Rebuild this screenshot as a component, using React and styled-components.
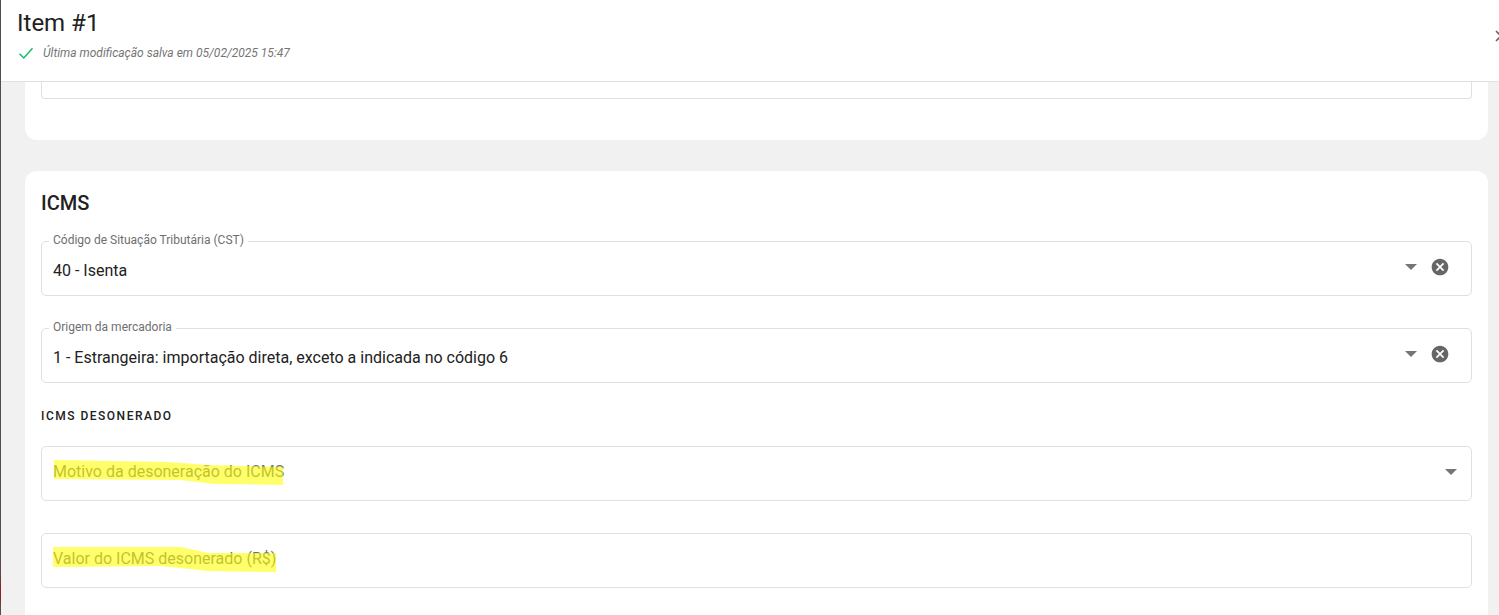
import React from "react";
import styled, { createGlobalStyle } from "styled-components";

const GlobalStyle = createGlobalStyle`
  html, body {
    margin: 0;
    height: 100%;
    overflow: hidden;
    background: #f1f1f1;
    font-family: Roboto, "Liberation Sans", sans-serif;
  }
`;

const Page = styled.div`
  display: flex;
  width: 1499px;
  height: 615px;
  overflow: hidden;
`;

const LeftEdge = styled.div`
  flex: 0 0 1px;
  background: linear-gradient(
    to bottom,
    #4f4f4f 0,
    #4f4f4f 525px,
    #5e4a4a 570px,
    #8c1f2a 590px,
    #8c1f2a 598px,
    #5e4a4a 605px
  );
`;

const Drawer = styled.div`
  flex: 1;
  min-width: 0;
  display: flex;
  flex-direction: column;
`;

const Header = styled.header`
  flex: 0 0 82px;
  box-sizing: border-box;
  position: relative;
  background: #fff;
  border-bottom: 1px solid #e0e0e0;
  padding: 8px 16px 0;
`;

const Title = styled.h1`
  margin: 0;
  font-size: 24px;
  line-height: 30px;
  font-weight: 400;
  color: #212121;
`;

const Status = styled.div`
  display: flex;
  align-items: center;
  gap: 9px;
  margin: 7px 0 0 1px;
  font-size: 12px;
  line-height: 16px;
  font-style: italic;
  color: #757575;
`;

const CloseButton = styled.div`
  position: absolute;
  top: 25px;
  left: 1491px;
  display: flex;
  color: #666;
`;

const Body = styled.main`
  flex: 1;
  min-height: 0;
  overflow: hidden;
  padding: 0 11px 0 24px;
  display: flex;
  flex-direction: column;
  gap: 31px;
`;

const TopCard = styled.section`
  flex: 0 0 58px;
  box-sizing: border-box;
  background: #fff;
  border-radius: 0 0 12px 12px;
  padding: 0 16px;
`;

const CutField = styled.div`
  height: 17px;
  box-sizing: border-box;
  border: 1px solid #e0e0e0;
  border-top: 0;
  border-radius: 0 0 4px 4px;
`;

const Card = styled.section`
  flex: 0 0 480px;
  box-sizing: border-box;
  background: #fff;
  border-radius: 12px 12px 0 0;
  padding: 20px 16px 0;
`;

const SectionTitle = styled.h2`
  margin: 0 0 26px;
  font-size: 20px;
  line-height: 24px;
  font-weight: 500;
  color: #212121;
`;

const Outline = styled.div`
  position: relative;
  box-sizing: border-box;
  height: 55px;
  margin-bottom: ${(p) => p.$gap}px;
  border: 1px solid #e0e0e0;
  border-radius: 5px;
  background: #fff;
  display: flex;
  align-items: center;
  padding: 0 11px;
`;

const FloatLabel = styled.label`
  position: absolute;
  top: -9px;
  left: 7px;
  padding: 0 4px;
  background: #fff;
  font-size: 12px;
  line-height: 14px;
  color: #6f6f6f;
`;

const Value = styled.span`
  flex: 1;
  font-size: 16px;
  line-height: 20px;
  color: ${(p) => (p.$empty ? "#6f6f6f" : "#212121")};
  transform: translateY(${(p) => (p.$empty ? "-2px" : "2px")});
`;

const Icons = styled.div`
  display: flex;
  align-items: center;
  gap: 13px;
  margin-right: ${(p) => (p.$clear ? "10px" : "3px")};
  transform: translateY(-2px);
`;

const Subheading = styled.h3`
  margin: 0 0 23px;
  font-size: 12px;
  line-height: 13px;
  font-weight: 500;
  letter-spacing: 1.5px;
  color: #212121;
`;

const Marker = styled.svg`
  position: absolute;
  left: 0;
  top: 0;
  pointer-events: none;
`;

const Check = () => (
  <svg width="16" height="16" viewBox="0 0 16 16" fill="none">
    <path d="M1.5 8.8 L5.8 13 L14.5 3.2" stroke="#0fbf6b" strokeWidth="1.5" />
  </svg>
);

const ArrowDrop = () => (
  <svg width="12" height="6" viewBox="0 0 12 6">
    <path d="M0 0h12L6 6z" fill="#757575" />
  </svg>
);

const ClearIcon = () => (
  <svg width="20" height="20" viewBox="0 0 24 24">
    <path
      fill="#666"
      d="M12 2C6.47 2 2 6.47 2 12s4.47 10 10 10 10-4.47 10-10S17.53 2 12 2zm5 13.59L15.59 17 12 13.41 8.41 17 7 15.59 10.59 12 7 8.41 8.41 7 12 10.59 15.59 7 17 8.41 13.41 12 17 15.59z"
    />
  </svg>
);

const Field = ({ label, value, placeholder, select, clear, marker, gap = 32 }) => (
  <Outline $gap={gap}>
    {label && <FloatLabel>{label}</FloatLabel>}
    <Value $empty={!value}>{value || placeholder}</Value>
    {select && (
      <Icons $clear={clear}>
        <ArrowDrop />
        {clear && <ClearIcon />}
      </Icons>
    )}
    {marker && (
      <Marker width="260" height="50">
        <polygon points={marker} fill="#ffff00" fillOpacity="0.58" />
      </Marker>
    )}
  </Outline>
);

export default function App() {
  return (
    <Page>
      <GlobalStyle />
      <LeftEdge />
      <Drawer>
        <Header>
          <Title>Item #1</Title>
          <Status>
            <Check />
            Última modificação salva em 05/02/2025 15:47
          </Status>
          <CloseButton>
            <svg width="20" height="20" viewBox="0 0 20 20" fill="none">
              <path d="M4 6l5 5M9 11l-5 5" stroke="currentColor" strokeWidth="1.6" />
            </svg>
          </CloseButton>
        </Header>
        <Body>
          <TopCard>
            <CutField />
          </TopCard>
          <Card>
            <SectionTitle>ICMS</SectionTitle>
            <Field
              label="Código de Situação Tributária (CST)"
              value="40 - Isenta"
              select
              clear
            />
            <Field
              label="Origem da mercadoria"
              value="1 - Estrangeira: importação direta, exceto a indicada no código 6"
              select
              clear
              gap={27}
            />
            <Subheading>ICMS DESONERADO</Subheading>
            <Field
              placeholder="Motivo da desoneração do ICMS"
              select
              marker="12,13 126,15 166,18 241,20 241,38 172,37 139,33 12,32"
            />
            <Field
              placeholder="Valor do ICMS desonerado (R$)"
              marker="11,13 139,13 166,19 234,19 234,38 166,37 119,32 11,33"
            />
          </Card>
        </Body>
      </Drawer>
    </Page>
  );
}
